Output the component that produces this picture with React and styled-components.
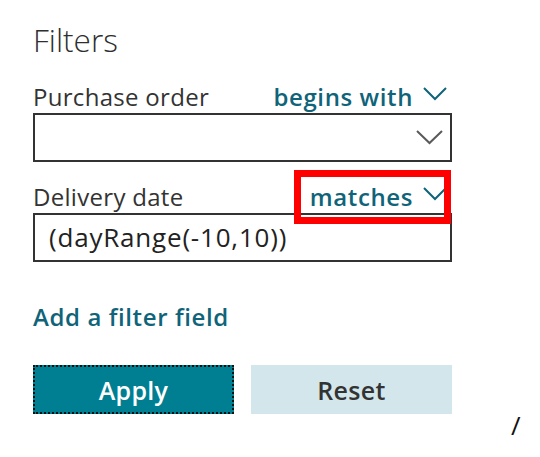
import React from 'react';
import styled, { createGlobalStyle } from 'styled-components';

const GlobalStyle = createGlobalStyle`
  html, body {
    margin: 0;
    padding: 0;
    background: #ffffff;
  }
  body {
    font-family: "Open Sans", "Noto Sans", Arial, sans-serif;
    color: #222;
  }
`;

function Chevron({ color = '#0f6479', w = 24, h = 12, lift = 0 }) {
  return (
    <ChevronSvg lift={lift} width={w} height={h + 2} viewBox={`0 0 ${w} ${h + 2}`} fill="none">
      <path d={`M1 1 L${w / 2} ${h} L${w - 1} 1`} stroke={color} strokeWidth="2" />
    </ChevronSvg>
  );
}

function Field({ label, operator, value, dropdown, highlighted }) {
  return (
    <FieldWrap>
      <FieldHeader>
        <Label>{label}</Label>
        <Operator highlighted={highlighted}>
          {operator}
          <Chevron lift={6} />
        </Operator>
      </FieldHeader>
      <InputBox>
        <Value>{value}</Value>
        {dropdown && <Chevron color="#5a5a5a" w={27} h={13} />}
      </InputBox>
    </FieldWrap>
  );
}

export default function App() {
  return (
    <Page>
      <GlobalStyle />
      <Panel>
        <Title>Filters</Title>
        <Field label="Purchase order" operator="begins with" value="" dropdown />
        <Field label="Delivery date" operator="matches" value="(dayRange(-10,10))" highlighted />
        <AddLink>Add a filter field</AddLink>
        <Buttons>
          <PrimaryButton>Apply</PrimaryButton>
          <SecondaryButton>Reset</SecondaryButton>
        </Buttons>
      </Panel>
      <Slash>/</Slash>
    </Page>
  );
}

const Page = styled.div`
  width: 540px;
  height: 457px;
  position: relative;
  overflow: hidden;
`;

const Panel = styled.div`
  width: 419px;
  padding: 20px 0 0 33px;
  display: flex;
  flex-direction: column;
`;

const Title = styled.div`
  font-size: 31.5px;
  font-weight: 300;
  color: #2e2e2e;
  line-height: 40px;
  margin-bottom: 21px;
`;

const ChevronSvg = styled.svg`
  flex: none;
  margin-bottom: ${p => p.lift}px;
`;

const FieldWrap = styled.div`
  display: flex;
  flex-direction: column;
  margin-bottom: 19px;
`;

const FieldHeader = styled.div`
  display: flex;
  justify-content: space-between;
  align-items: center;
  height: 32px;
  line-height: 32px;
`;

const Label = styled.div`
  font-size: 24px;
  color: #333;
  letter-spacing: 0.3px;
`;

const Operator = styled.div`
  position: relative;
  display: flex;
  align-items: center;
  gap: 10px;
  padding-right: 5px;
  font-size: 24px;
  font-weight: 600;
  color: #0f6479;
  letter-spacing: 0.6px;
  z-index: 1;
  &::after {
    content: '';
    display: ${p => (p.highlighted ? 'block' : 'none')};
    position: absolute;
    left: -16px;
    right: 1px;
    top: -11px;
    bottom: -11px;
    border: 7px solid #ff0000;
  }
`;

const InputBox = styled.div`
  height: 49px;
  box-sizing: border-box;
  border: 2px solid #333;
  display: flex;
  align-items: center;
  justify-content: space-between;
  padding: 0 7px 0 14px;
`;

const Value = styled.div`
  font-size: 26px;
  color: #222;
  letter-spacing: 0.8px;
  padding-bottom: 2px;
`;

const AddLink = styled.div`
  margin-top: 20px;
  font-size: 24px;
  line-height: 32px;
  font-weight: 600;
  color: #0f6479;
  letter-spacing: 0.6px;
`;

const Buttons = styled.div`
  display: flex;
  gap: 17px;
  margin-top: 32px;
`;

const PrimaryButton = styled.div`
  width: 201px;
  height: 49px;
  box-sizing: border-box;
  display: flex;
  align-items: center;
  justify-content: center;
  background: #007f92;
  border: 2px dotted #111;
  color: #fff;
  font-size: 25px;
  font-weight: 600;
  letter-spacing: 0.3px;
`;

const SecondaryButton = styled(PrimaryButton)`
  background: #d2e6eb;
  border: none;
  color: #333;
`;

const Slash = styled.div`
  position: absolute;
  left: 511px;
  top: 407px;
  font-size: 26px;
  color: #111;
`;
